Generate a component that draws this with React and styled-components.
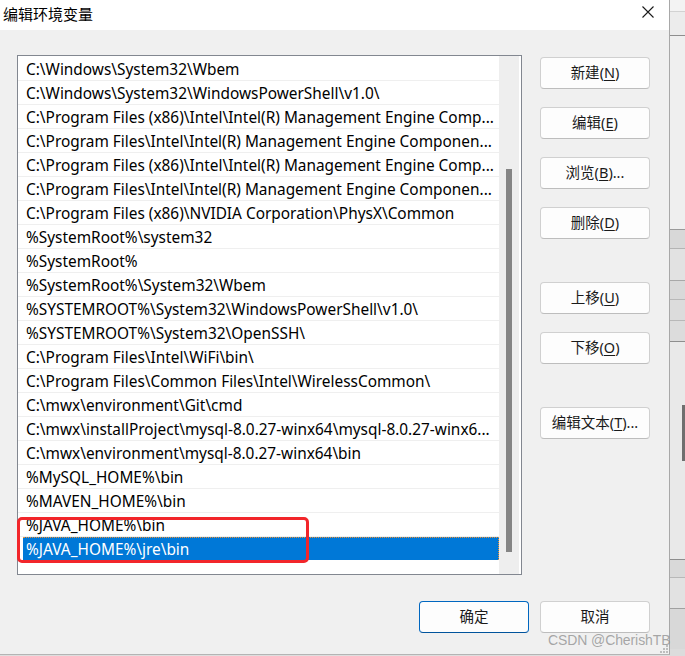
import React from 'react';
import styled, { createGlobalStyle } from 'styled-components';

const GlobalStyle = createGlobalStyle`
  html, body { margin: 0; padding: 0; }
  body {
    width: 685px; height: 656px; overflow: hidden; background: #dedede;
    font-family: "Noto Sans", "Noto Sans CJK SC", sans-serif;
  }
  * { box-sizing: border-box; }
`;

const Screen = styled.div`
  position: relative;
  display: flex;
  width: 685px;
  height: 656px;
`;

const Dialog = styled.div`
  position: relative;
  width: 670px;
  height: 655px;
  display: flex;
  flex-direction: column;
  background: #f0f0f0;
  border-right: 1px solid #a8a8a8;
  border-bottom: 1px solid #b4b4b4;
`;

const TitleBar = styled.div`
  height: 30px;
  flex: none;
  background: #ffffff;
  display: flex;
  align-items: center;
  justify-content: space-between;
  padding-left: 3px;
`;

const Title = styled.div`
  font-family: "Noto Sans CJK SC", sans-serif;
  font-size: 15px;
  color: #000;
  margin-top: -4px;
`;

const CloseBox = styled.div`
  width: 42px;
  height: 30px;
  display: flex;
  align-items: center;
  justify-content: center;
  margin-top: -6px;
`;

const Body = styled.div`
  flex: 1;
  display: flex;
  flex-direction: column;
  padding: 25px 0 0 17px;
`;

const MainRow = styled.div`
  display: flex;
  gap: 18px;
`;

const ListBox = styled.div`
  width: 505px;
  height: 520px;
  border: 1px solid #828790;
  background: #ffffff;
  display: flex;
`;

const Items = styled.div`
  flex: 1;
  padding-top: 1px;
  overflow: hidden;
`;

const Row = styled.div`
  height: 24px;
  padding-left: 5px;
  border-bottom: 1px solid ${p => (p.$selected ? 'transparent' : '#efefef')};
`;

const RowText = styled.div`
  height: ${p => (p.$selected ? '23px' : '100%')};
  display: flex;
  align-items: center;
  padding-left: 3px;
  font-family: "Noto Sans", "Noto Sans CJK SC", sans-serif;
  font-size: 15.4px;
  white-space: nowrap;
  overflow: hidden;
  color: ${p => (p.$selected ? '#ffffff' : '#000000')};
  background: ${p => (p.$selected ? '#0078d7' : 'transparent')};
  border-top: 1px dotted ${p => (p.$selected ? '#e8923a' : 'transparent')};
  border-right: 1px dotted ${p => (p.$selected ? '#e8923a' : 'transparent')};
`;

const Track = styled.div`
  width: 20px;
  margin-right: 2px;
  background: #eeeeee;
  display: flex;
  flex-direction: column;
`;

const Thumb = styled.div`
  width: 6px;
  height: 383px;
  margin: 113px 0 0 7px;
  background: #858585;
`;

const ButtonColumn = styled.div`
  display: flex;
  flex-direction: column;
  gap: 18px;
  padding-top: 2px;
`;

const Button = styled.button`
  width: 110px;
  height: 32px;
  margin-top: ${p => p.$extra || 0}px;
  background: #fdfdfd;
  border: 1px solid ${p => (p.$primary ? '#0067c0' : '#d0d0d0')};
  border-bottom-color: ${p => (p.$primary ? '#00539c' : '#bdbdbd')};
  border-radius: 4px;
  font-family: "Noto Sans", "Noto Sans CJK SC", sans-serif;
  font-size: 14.5px;
  color: #1a1a1a;
  padding: 0 0 3px 0;
  display: flex;
  align-items: center;
  justify-content: center;
`;

const Key = styled.span`
  text-decoration: underline;
  text-underline-offset: 2px;
`;

const Footer = styled.div`
  display: flex;
  justify-content: flex-end;
  gap: 11px;
  padding-right: 19px;
  margin-top: 26px;
`;

const RedMark = styled.div`
  position: absolute;
  left: 17px;
  top: 517px;
  width: 292px;
  height: 46px;
  border: 3px solid #f2262a;
  border-radius: 5px;
  pointer-events: none;
`;

const Grip = styled.svg`
  position: absolute;
  right: 1px;
  bottom: 1px;
`;

const Watermark = styled.div`
  position: absolute;
  left: 548px;
  top: 632px;
  font-family: "Liberation Sans", Arial, sans-serif;
  font-size: 14px;
  letter-spacing: -0.1px;
  color: rgba(140, 140, 140, 0.75);
  white-space: nowrap;
`;

const BackStrip = styled.div`
  flex: 1;
  display: flex;
  flex-direction: column;
  background: #dcdcdc;
`;

const Segment = styled.div`
  height: ${p => p.$h}px;
  flex: none;
  background: ${p => p.$bg};
  border-bottom: 1px solid ${p => p.$line};
  display: flex;
  flex-direction: column;
`;

const DarkBar = styled.div`
  width: 3px;
  height: 56px;
  margin: 63px 0 0 auto;
  background: #6f6f6f;
`;

const items = [
  'C:\\Windows\\System32\\Wbem',
  'C:\\Windows\\System32\\WindowsPowerShell\\v1.0\\',
  'C:\\Program Files (x86)\\Intel\\Intel(R) Management Engine Comp...',
  'C:\\Program Files\\Intel\\Intel(R) Management Engine Componen...',
  'C:\\Program Files (x86)\\Intel\\Intel(R) Management Engine Comp...',
  'C:\\Program Files\\Intel\\Intel(R) Management Engine Componen...',
  'C:\\Program Files (x86)\\NVIDIA Corporation\\PhysX\\Common',
  '%SystemRoot%\\system32',
  '%SystemRoot%',
  '%SystemRoot%\\System32\\Wbem',
  '%SYSTEMROOT%\\System32\\WindowsPowerShell\\v1.0\\',
  '%SYSTEMROOT%\\System32\\OpenSSH\\',
  'C:\\Program Files\\Intel\\WiFi\\bin\\',
  'C:\\Program Files\\Common Files\\Intel\\WirelessCommon\\',
  'C:\\mwx\\environment\\Git\\cmd',
  'C:\\mwx\\installProject\\mysql-8.0.27-winx64\\mysql-8.0.27-winx6...',
  'C:\\mwx\\environment\\mysql-8.0.27-winx64\\bin',
  '%MySQL_HOME%\\bin',
  '%MAVEN_HOME%\\bin',
  '%JAVA_HOME%\\bin',
  '%JAVA_HOME%\\jre\\bin',
];

const sideButtons = [
  { label: '新建', key: 'N' },
  { label: '编辑', key: 'E' },
  { label: '浏览', key: 'B', tail: '...' },
  { label: '删除', key: 'D' },
  { label: '上移', key: 'U', extra: 25 },
  { label: '下移', key: 'O' },
  { label: '编辑文本', key: 'T', tail: '...', extra: 25 },
];

const segments = [
  { h: 12, bg: '#f3f3f3', line: '#d2d2d2' },
  { h: 24, bg: '#ececec', line: '#8e8e8e' },
  { h: 194, bg: '#efefef', line: '#9a9a9a' },
  { h: 19, bg: '#d8d8d8', line: '#b4b4b4' },
  { h: 32, bg: '#e2e2e2', line: '#a8a8a8' },
  { h: 19, bg: '#d9d9d9', line: '#b8b8b8' },
  { h: 21, bg: '#dcdcdc', line: '#b8b8b8' },
  { h: 21, bg: '#dcdcdc', line: '#8e8e8e' },
  { h: 218, bg: '#e9e9e9', line: '#8e8e8e', bar: true },
  { h: 18, bg: '#d9d9d9', line: '#b8b8b8' },
  { h: 31, bg: '#e2e2e2', line: '#a0a0a0' },
  { h: 40, bg: '#d8d8d8', line: '#d8d8d8' },
];

export default function App() {
  const selected = items.length - 1;
  return (
    <>
      <GlobalStyle />
      <Screen>
        <Dialog>
          <TitleBar>
            <Title>编辑环境变量</Title>
            <CloseBox>
              <svg width="12" height="12" viewBox="0 0 12 12">
                <path d="M0.5 0.5 L11.5 11.5 M11.5 0.5 L0.5 11.5" stroke="#1a1a1a" strokeWidth="1.1" fill="none" />
              </svg>
            </CloseBox>
          </TitleBar>
          <Body>
            <MainRow>
              <ListBox>
                <Items>
                  {items.map((t, i) => (
                    <Row key={i} $selected={i === selected}>
                      <RowText $selected={i === selected}>{t}</RowText>
                    </Row>
                  ))}
                </Items>
                <Track>
                  <Thumb />
                </Track>
              </ListBox>
              <ButtonColumn>
                {sideButtons.map(b => (
                  <Button key={b.key} $extra={b.extra}>
                    {b.label}(<Key>{b.key}</Key>){b.tail || ''}
                  </Button>
                ))}
              </ButtonColumn>
            </MainRow>
            <Footer>
              <Button $primary>确定</Button>
              <Button>取消</Button>
            </Footer>
          </Body>
          <RedMark />
          <Grip width="8" height="8" viewBox="0 0 8 8">
            <rect x="6" y="0" width="2" height="2" fill="#bdbdbd" />
            <rect x="3" y="3" width="2" height="2" fill="#bdbdbd" />
            <rect x="6" y="3" width="2" height="2" fill="#bdbdbd" />
            <rect x="0" y="6" width="2" height="2" fill="#bdbdbd" />
            <rect x="3" y="6" width="2" height="2" fill="#bdbdbd" />
            <rect x="6" y="6" width="2" height="2" fill="#bdbdbd" />
          </Grip>
        </Dialog>
        <BackStrip>
          {segments.map((s, i) => (
            <Segment key={i} $h={s.h} $bg={s.bg} $line={s.line}>
              {s.bar && <DarkBar />}
            </Segment>
          ))}
        </BackStrip>
        <Watermark>CSDN @CherishTB</Watermark>
      </Screen>
    </>
  );
}
